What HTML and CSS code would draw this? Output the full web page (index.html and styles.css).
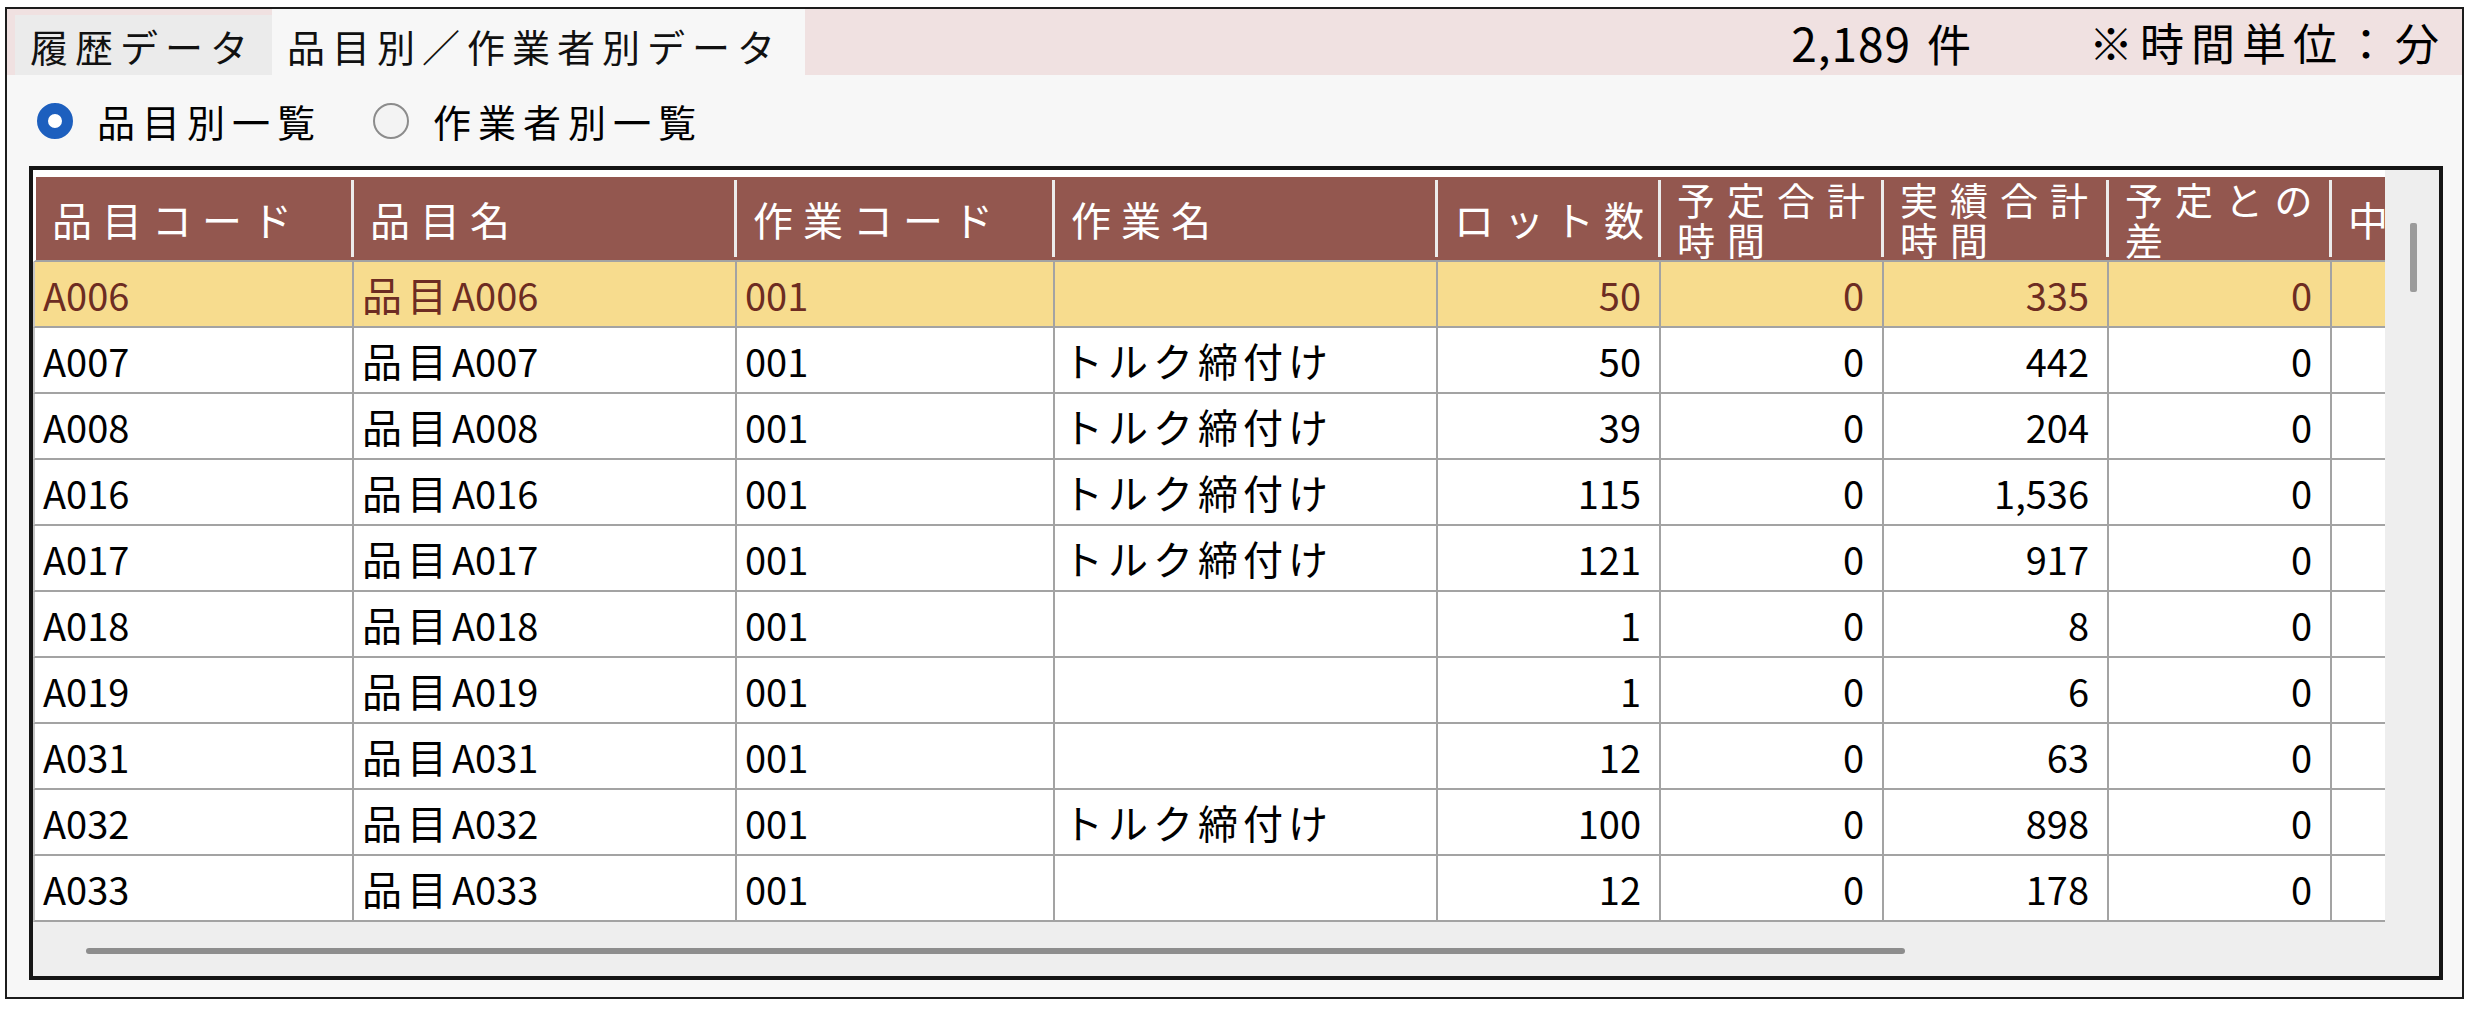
FILE: index.html
```html
<!DOCTYPE html>
<html lang="ja">
<head>
<meta charset="utf-8">
<title>品目別／作業者別データ</title>
<link rel="stylesheet" href="styles.css">
</head>
<body>
<div class="window">
  <div class="tabbar">
    <div class="tab">履歴データ</div>
    <div class="tab active">品目別／作業者別データ</div>
    <div class="count"><span class="count-num">2,189</span> 件</div>
    <div class="unit">※時間単位：分</div>
  </div>
  <div class="options">
    <label class="opt"><span class="radio on"></span>品目別一覧</label>
    <label class="opt"><span class="radio"></span>作業者別一覧</label>
  </div>
  <div class="grid">
    <div class="grid-main">
      <div class="viewport">
        <table>
          <colgroup>
            <col class="c-code"><col class="c-name"><col class="c-wcode"><col class="c-wname">
            <col class="c-num"><col class="c-num"><col class="c-num7"><col class="c-num"><col class="c-num">
          </colgroup>
          <thead>
            <tr class="head">
              <th>品目コード</th><th>品目名</th><th>作業コード</th><th>作業名</th>
              <th>ロット数</th><th class="two">予定合計<br>時間</th><th class="two">実績合計<br>時間</th><th class="two">予定との<br>差</th><th>中断時間</th>
            </tr>
          </thead>
          <tbody>
            <tr class="sel"><td>A006</td><td class="jp">品目<span class="code">A006</span></td><td>001</td><td class="jp"></td><td class="r">50</td><td class="r">0</td><td class="r">335</td><td class="r">0</td><td></td></tr>
            <tr><td>A007</td><td class="jp">品目<span class="code">A007</span></td><td>001</td><td class="jp">トルク締付け</td><td class="r">50</td><td class="r">0</td><td class="r">442</td><td class="r">0</td><td></td></tr>
            <tr><td>A008</td><td class="jp">品目<span class="code">A008</span></td><td>001</td><td class="jp">トルク締付け</td><td class="r">39</td><td class="r">0</td><td class="r">204</td><td class="r">0</td><td></td></tr>
            <tr><td>A016</td><td class="jp">品目<span class="code">A016</span></td><td>001</td><td class="jp">トルク締付け</td><td class="r">115</td><td class="r">0</td><td class="r">1,536</td><td class="r">0</td><td></td></tr>
            <tr><td>A017</td><td class="jp">品目<span class="code">A017</span></td><td>001</td><td class="jp">トルク締付け</td><td class="r">121</td><td class="r">0</td><td class="r">917</td><td class="r">0</td><td></td></tr>
            <tr><td>A018</td><td class="jp">品目<span class="code">A018</span></td><td>001</td><td class="jp"></td><td class="r">1</td><td class="r">0</td><td class="r">8</td><td class="r">0</td><td></td></tr>
            <tr><td>A019</td><td class="jp">品目<span class="code">A019</span></td><td>001</td><td class="jp"></td><td class="r">1</td><td class="r">0</td><td class="r">6</td><td class="r">0</td><td></td></tr>
            <tr><td>A031</td><td class="jp">品目<span class="code">A031</span></td><td>001</td><td class="jp"></td><td class="r">12</td><td class="r">0</td><td class="r">63</td><td class="r">0</td><td></td></tr>
            <tr><td>A032</td><td class="jp">品目<span class="code">A032</span></td><td>001</td><td class="jp">トルク締付け</td><td class="r">100</td><td class="r">0</td><td class="r">898</td><td class="r">0</td><td></td></tr>
            <tr><td>A033</td><td class="jp">品目<span class="code">A033</span></td><td>001</td><td class="jp"></td><td class="r">12</td><td class="r">0</td><td class="r">178</td><td class="r">0</td><td></td></tr>
          </tbody>
        </table>
      </div>
      <div class="vscroll"><div class="vthumb"></div></div>
    </div>
    <div class="hscroll"><div class="hthumb"></div></div>
  </div>
</div>
</body>
</html>
```
FILE: styles.css
```css
html, body {
  margin: 0;
  background: #ffffff;
}
body {
  font-family: "Noto Sans CJK JP", "Noto Sans", sans-serif;
  color: #000;
}
.window {
  box-sizing: border-box;
  width: 2459px;
  height: 992px;
  margin: 7px 0 0 5px;
  border: 2px solid #1c1c1c;
  background: #f7f7f7;
  display: flex;
  flex-direction: column;
}

/* tab bar */
.tabbar {
  flex: none;
  height: 66px;
  background: #f0e1e1;
  display: flex;
  align-items: center;
}
.tab {
  box-sizing: border-box;
  align-self: flex-end;
  height: 60px;
  width: 257px;
  margin-left: 8px;
  padding-left: 15px;
  display: flex;
  align-items: center;
  background: #ebebeb;
  font-size: 38px;
  letter-spacing: 7px;
  color: #111;
  white-space: nowrap;
}
.tab.active {
  width: 533px;
  height: 66px;
  margin-left: 0;
  padding-top: 6px;
  background: #f7f7f7;
}
.count {
  margin-left: auto;
  font-size: 44px;
  letter-spacing: 6px;
  white-space: nowrap;
}
.count-num {
  font-size: 46px;
  letter-spacing: 1px;
}
.unit {
  margin-left: 112px;
  margin-right: 16px;
  font-size: 44px;
  letter-spacing: 7px;
  white-space: nowrap;
}

/* radio options */
.options {
  flex: none;
  height: 91px;
  display: flex;
  align-items: center;
  gap: 51px;
  padding-left: 30px;
  font-size: 38px;
  letter-spacing: 7px;
}
.opt {
  display: flex;
  align-items: center;
  gap: 24px;
}
.radio {
  box-sizing: border-box;
  width: 36px;
  height: 36px;
  border-radius: 50%;
  border: 2px solid #8c8c8c;
  background: #f3f3f3;
}
.radio.on {
  border: 11px solid #1d5fbe;
  background: #fff;
}

/* grid */
.grid {
  box-sizing: border-box;
  flex: none;
  width: 2414px;
  height: 814px;
  margin-left: 22px;
  border: 4px solid #151515;
  display: flex;
  flex-direction: column;
}
.grid-main {
  display: flex;
  height: 752px;
}
.viewport {
  box-sizing: border-box;
  width: 2352px;
  padding-top: 7px;
  overflow: hidden;
  background: #fff;
}
.vscroll {
  flex: 1;
  background: #eeeeee;
  padding: 53px 0 0 25px;
}
.vthumb {
  width: 7px;
  height: 69px;
  background: #9b9b9b;
  border-radius: 2px;
}
.hscroll {
  flex: 1;
  background: #eeeeee;
  padding: 26px 0 0 53px;
}
.hthumb {
  width: 1819px;
  height: 6px;
  background: #8d8d8d;
  border-radius: 3px;
}

table {
  border-collapse: separate;
  border-spacing: 0;
  table-layout: fixed;
  width: 2521px;
}
col.c-code { width: 321px; }
col.c-name { width: 383px; }
col.c-wcode { width: 318px; }
col.c-wname { width: 383px; }
col.c-num { width: 223px; }
col.c-num7 { width: 225px; }

tr.head { height: 85px; }
tbody tr { height: 66px; }

th {
  padding: 0 0 0 16px;
  background: #93574f linear-gradient(#ececec, #ececec) no-repeat right 0 top 3px / 3px calc(100% - 6px);
  border-bottom: 2px solid #a3a3a3;
  color: #fff;
  font-weight: 400;
  font-size: 40px;
  letter-spacing: 10px;
  line-height: 40px;
  text-align: left;
  vertical-align: middle;
  white-space: nowrap;
}
th:first-child {
  border-left: 3px solid #fff;
}
th.two {
  font-size: 38px;
  letter-spacing: 12px;
  line-height: 40px;
}

td {
  padding: 0 8px;
  border-right: 2px solid #a3a3a3;
  border-bottom: 2px solid #a3a3a3;
  font-size: 38px;
  white-space: nowrap;
  overflow: hidden;
  vertical-align: middle;
  color: #000;
  background: #fff;
}
td:first-child {
  border-left: 2px solid #c4c4c4;
}
td.r {
  text-align: right;
  padding-right: 18px;
}
td.jp {
  font-size: 40px;
  letter-spacing: 5px;
}
.code {
  font-size: 38px;
  letter-spacing: 0;
}
tr.sel td {
  background: #f7dc8e;
  color: #6d2c22;
}
```
